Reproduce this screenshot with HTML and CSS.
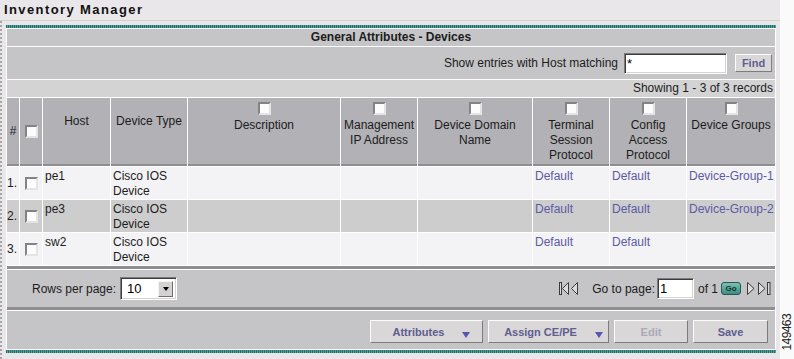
FILE: index.html
```html
<!DOCTYPE html>
<html lang="en">
<head>
    <meta charset="UTF-8">
    <title>Inventory Manager</title>
    <link rel="stylesheet" href="styles.css">
</head>
<body>
<div class="wrap">
    <div class="page">
        <h1 class="page-title">Inventory Manager</h1>

        <div class="content">
            <div class="panel">
                <div class="teal-bar"></div>
                <div class="panel-title">General Attributes - Devices</div>

                <div class="filter-row">
                    <label for="host-filter">Show entries with Host matching</label>
                    <input id="host-filter" class="text-field" type="text" value="*">
                    <button class="btn btn-find">Find</button>
                </div>

                <div class="count-row">Showing 1 - 3 of 3 records</div>

                <table class="grid">
                    <colgroup>
                        <col class="col-num">
                        <col class="col-check">
                        <col class="col-host">
                        <col class="col-type">
                        <col class="col-desc">
                        <col class="col-ip">
                        <col class="col-domain">
                        <col class="col-term">
                        <col class="col-config">
                        <col class="col-groups">
                    </colgroup>
                    <thead>
                        <tr>
                            <th class="th-mid">#</th>
                            <th class="th-mid"><input type="checkbox" class="chk"></th>
                            <th class="th-low">Host</th>
                            <th class="th-low">Device Type</th>
                            <th><input type="checkbox" class="chk chk-head">Description</th>
                            <th><input type="checkbox" class="chk chk-head">Management IP Address</th>
                            <th><input type="checkbox" class="chk chk-head">Device Domain Name</th>
                            <th><input type="checkbox" class="chk chk-head">Terminal Session Protocol</th>
                            <th><input type="checkbox" class="chk chk-head">Config Access Protocol</th>
                            <th><input type="checkbox" class="chk chk-head">Device Groups</th>
                        </tr>
                    </thead>
                    <tbody>
                        <tr class="row-light">
                            <td class="td-num">1.</td>
                            <td class="td-check"><input type="checkbox" class="chk"></td>
                            <td>pe1</td>
                            <td>Cisco IOS Device</td>
                            <td></td>
                            <td></td>
                            <td></td>
                            <td><a href="#">Default</a></td>
                            <td><a href="#">Default</a></td>
                            <td class="nowrap"><a href="#">Device-Group-1</a></td>
                        </tr>
                        <tr class="row-dark">
                            <td class="td-num">2.</td>
                            <td class="td-check"><input type="checkbox" class="chk"></td>
                            <td>pe3</td>
                            <td>Cisco IOS Device</td>
                            <td></td>
                            <td></td>
                            <td></td>
                            <td><a href="#">Default</a></td>
                            <td><a href="#">Default</a></td>
                            <td class="nowrap"><a href="#">Device-Group-2</a></td>
                        </tr>
                        <tr class="row-light">
                            <td class="td-num">3.</td>
                            <td class="td-check"><input type="checkbox" class="chk"></td>
                            <td>sw2</td>
                            <td>Cisco IOS Device</td>
                            <td></td>
                            <td></td>
                            <td></td>
                            <td><a href="#">Default</a></td>
                            <td><a href="#">Default</a></td>
                            <td></td>
                        </tr>
                    </tbody>
                </table>

                <div class="band"></div>

                <div class="pager-row">
                    <div class="rows-per-page">
                        <span>Rows per page:</span>
                        <span class="select">
                            <span class="select-value">10</span>
                            <span class="select-arrow"><span class="tri-down"></span></span>
                        </span>
                    </div>

                    <div class="page-nav">
                        <svg class="nav-first" width="10" height="13" viewBox="0 0 10 13">
                            <rect x="0.5" y="0.5" width="2" height="12" fill="#dcdcdc" stroke="#3a3a3a"/>
                            <polygon points="9.5,0.5 3.5,6.5 9.5,12.5" fill="#dcdcdc" stroke="#3a3a3a"/>
                        </svg>
                        <svg class="nav-prev" width="7" height="13" viewBox="0 0 7 13">
                            <polygon points="6.5,0.5 0.5,6.5 6.5,12.5" fill="#dcdcdc" stroke="#3a3a3a"/>
                        </svg>
                        <span class="nav-label">Go to page:</span>
                        <input class="text-field page-field" type="text" value="1">
                        <span class="nav-of">of 1</span>
                        <button class="go-btn">Go</button>
                        <svg class="nav-next" width="8" height="13" viewBox="0 0 8 13">
                            <polygon points="0.5,0.5 7,6.5 0.5,12.5" fill="#dcdcdc" stroke="#3a3a3a"/>
                        </svg>
                        <svg class="nav-last" width="13" height="13" viewBox="0 0 13 13">
                            <polygon points="0.5,0.5 7,6.5 0.5,12.5" fill="#dcdcdc" stroke="#3a3a3a"/>
                            <rect x="9.5" y="0.5" width="2.5" height="12" fill="#dcdcdc" stroke="#3a3a3a"/>
                        </svg>
                    </div>
                </div>

                <div class="band band-thin"></div>

                <div class="actions-row">
                    <button class="btn btn-menu btn-attr">Attributes<span class="caret"></span></button>
                    <button class="btn btn-menu btn-assign">Assign CE/PE<span class="caret"></span></button>
                    <button class="btn btn-plain btn-disabled" disabled>Edit</button>
                    <button class="btn btn-plain">Save</button>
                </div>

                <div class="teal-bar"></div>
            </div>
        </div>
    </div>

    <div class="fig-number">149463</div>
</div>
</body>
</html>
```

FILE: styles.css
```css
body {
    margin: 0;
    background-color: #fafafa;
    font-family: "Liberation Sans", Arial, sans-serif;
    font-size: 12px;
    color: #1c1c1c;
}

.wrap {
    display: flex;
    min-height: 100vh;
}

.page {
    width: 780px;
    display: flex;
    flex-direction: column;
    background-color: #e9e7ea;
}

.page-title {
    margin: 0;
    height: 20px;
    padding-left: 4px;
    border-bottom: 1px solid #d3d1d4;
    font-size: 13px;
    line-height: 20px;
    letter-spacing: 1.4px;
    color: #111;
}

.content {
    flex: 1;
    border-left: 2px dotted #a7a5a8;
    padding: 4px 0 0 4px;
}

.panel {
    width: 770px;
    background-color: #fff;
}

/* dotted teal strip at the top and bottom of the panel */
.teal-bar {
    height: 3px;
    background: repeating-linear-gradient(90deg, #23706b 0 1px, #55a09a 1px 2px);
}

.panel-title {
    margin: 1px 1px;
    height: 17px;
    line-height: 17px;
    text-align: center;
    font-weight: bold;
    background-color: #c5c4c7;
}

.filter-row {
    margin: 0 1px 1px;
    height: 32px;
    display: flex;
    align-items: center;
    justify-content: flex-end;
    padding-right: 3px;
    background-color: #c5c4c7;
}

.filter-row label {
    margin-right: 6px;
}

.text-field {
    box-sizing: border-box;
    margin: 0;
    padding: 0 2px;
    border: 1px solid;
    border-color: #7b7b7b #fff #fff #7b7b7b;
    box-shadow: inset 1px 1px 0 #3c3c3c, inset -1px -1px 0 #d6d3ce;
    background-color: #fff;
    font-family: "Liberation Sans", Arial, sans-serif;
    font-size: 13px;
    color: #000;
    outline: none;
}

.filter-row .text-field {
    width: 103px;
    height: 21px;
    padding-top: 0;
    line-height: 15px;
}

.btn {
    box-sizing: border-box;
    margin: 0;
    padding: 0;
    border: 1px solid;
    border-color: #fcfcfc #7c7c7c #7c7c7c #fcfcfc;
    background-color: #d9d7d8;
    font-family: "Liberation Sans", Arial, sans-serif;
    font-size: 11px;
    font-weight: bold;
    color: #5e5e90;
}

.btn-find {
    width: 37px;
    height: 18px;
    margin-left: 8px;
}

.count-row {
    margin: 0 1px;
    height: 17px;
    line-height: 17px;
    text-align: right;
    padding-right: 2px;
    background-color: #d3d3d4;
}

/* device table */
.grid {
    width: 770px;
    table-layout: fixed;
    border-collapse: separate;
    border-spacing: 1px;
}

.col-num { width: 12px; }
.col-check { width: 22px; }
.col-host { width: 67px; }
.col-type { width: 76px; }
.col-desc { width: 152px; }
.col-ip { width: 76px; }
.col-domain { width: 114px; }
.col-term { width: 76px; }
.col-config { width: 76px; }
.col-groups { width: 88px; }

.grid th {
    padding: 4px 1px 1px;
    vertical-align: top;
    font-weight: normal;
    line-height: 15px;
    background-color: #b2b1b5;
    border-bottom: 2px solid #8e8d90;
}

.grid th.th-mid {
    vertical-align: middle;
    padding: 0;
}

.grid th.th-low {
    padding-top: 16px;
}

.grid td {
    padding: 2px 0 0 2px;
    vertical-align: top;
    line-height: 15px;
}

.grid td.td-num {
    padding: 0;
    vertical-align: middle;
}

.grid td.td-check {
    padding: 0;
    vertical-align: middle;
    text-align: center;
}

.grid .nowrap {
    white-space: nowrap;
}

.row-light td {
    background-color: #f3f2f4;
}

.row-dark td {
    background-color: #cdcdce;
}

.grid a {
    color: #5b5ba6;
    text-decoration: none;
}

.chk {
    -webkit-appearance: none;
    appearance: none;
    box-sizing: border-box;
    display: inline-block;
    vertical-align: middle;
    width: 13px;
    height: 13px;
    margin: 0;
    border: 2px solid;
    border-color: #838383 #e4e4e4 #e4e4e4 #838383;
    background-color: #fcfcfc;
}

.chk-head {
    display: block;
    margin: 0 auto 3px;
}

.band {
    margin: 0 1px 1px;
    height: 3px;
    background-color: #8f8e91;
}

/* rows per page and paging */
.pager-row {
    margin: 0 1px;
    height: 37px;
    display: flex;
    align-items: center;
    justify-content: space-between;
    padding: 0 4px 0 25px;
    background-color: #c5c4c7;
}

.rows-per-page {
    display: flex;
    align-items: center;
    gap: 4px;
}

.select {
    box-sizing: border-box;
    width: 57px;
    height: 23px;
    display: flex;
    align-items: center;
    padding: 2px;
    border: 1px solid;
    border-color: #7b7b7b #fff #fff #7b7b7b;
    box-shadow: inset 1px 1px 0 #3c3c3c, inset -1px -1px 0 #d6d3ce;
    background-color: #fff;
}

.select-value {
    flex: 1;
    padding-left: 4px;
    font-size: 13px;
    color: #000;
}

.select-arrow {
    box-sizing: border-box;
    width: 15px;
    height: 16px;
    margin-right: 1px;
    display: flex;
    align-items: center;
    justify-content: center;
    border: 1px solid;
    border-color: #f4f4f4 #6e6e6e #6e6e6e #f4f4f4;
    background-color: #d4d2d2;
}

.tri-down {
    width: 0;
    height: 0;
    border-left: 3px solid transparent;
    border-right: 3px solid transparent;
    border-top: 4px solid #000;
}

.page-nav {
    display: flex;
    align-items: center;
}

.nav-prev {
    margin-left: 2px;
}

.nav-label {
    margin-left: 14px;
}

.page-field {
    width: 37px;
    height: 21px;
    margin-left: 2px;
    padding-top: 0;
    line-height: 15px;
}

.nav-of {
    margin-left: 4px;
}

.go-btn {
    box-sizing: border-box;
    width: 20px;
    height: 13px;
    margin: 0 0 0 3px;
    padding: 0;
    border: 1px solid #1d5a53;
    border-radius: 3px;
    background: linear-gradient(#7cc0b3, #3f8c80);
    font-family: "Liberation Sans", Arial, sans-serif;
    font-size: 8px;
    font-weight: bold;
    line-height: 11px;
    color: #12332f;
}

.nav-next {
    margin-left: 6px;
}

.nav-last {
    margin-left: 3px;
}

/* bottom action buttons */
.actions-row {
    box-sizing: border-box;
    margin: 0 1px 1px;
    height: 38px;
    display: flex;
    justify-content: flex-end;
    align-items: flex-start;
    gap: 5px;
    padding: 9px 7px 0 0;
    background-color: #c5c4c7;
}

.actions-row .btn {
    height: 23px;
}

.btn-menu {
    display: flex;
    justify-content: center;
    align-items: center;
    padding-left: 10px;
}

.btn-attr {
    width: 113px;
}

.btn-assign {
    width: 121px;
}

.btn-plain {
    width: 75px;
}

.btn-disabled {
    width: 74px;
    color: #a9a9ba;
}

.caret {
    align-self: flex-end;
    margin: 0 0 4px 18px;
    width: 0;
    height: 0;
    border-left: 4px solid transparent;
    border-right: 4px solid transparent;
    border-top: 6px solid #5656b2;
}

.fig-number {
    flex: 1;
    align-self: flex-end;
    margin-bottom: 9px;
    writing-mode: vertical-rl;
    transform: rotate(180deg);
    font-size: 12px;
    letter-spacing: -0.6px;
    line-height: 14px;
    color: #222;
}
```
